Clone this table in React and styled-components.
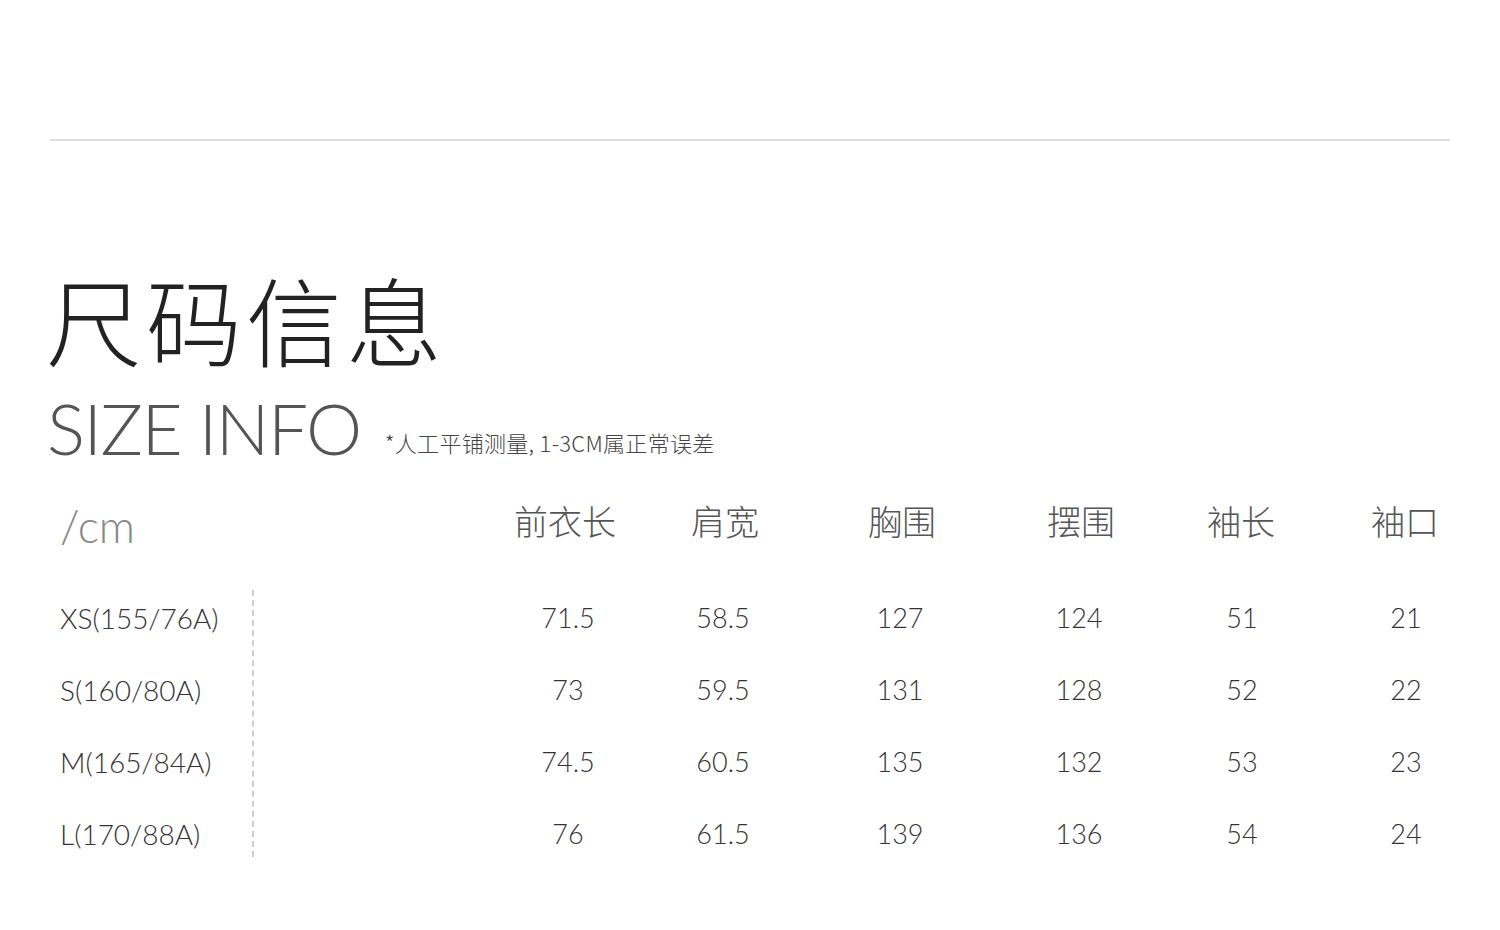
import React from 'react';
import styled, { createGlobalStyle } from 'styled-components';

const GlobalStyle = createGlobalStyle`
  html, body {
    margin: 0;
    padding: 0;
    background: #ffffff;
  }
  body {
    font-family: 'Lato', 'Noto Sans CJK SC', sans-serif;
  }
`;

const Page = styled.div`
  width: 1500px;
  height: 930px;
  padding: 139px 50px 0;
  box-sizing: border-box;
  background: #fff;
  overflow: hidden;
`;

const Rule = styled.div`
  height: 2px;
  background: #dedede;
`;

const Title = styled.h1`
  margin: 122px 0 0 -4px;
  font-family: 'Noto Sans CJK SC', sans-serif;
  font-weight: 300;
  font-size: 96px;
  line-height: 110px;
  letter-spacing: 4px;
  color: #222;
`;

const SubRow = styled.div`
  display: flex;
  align-items: flex-end;
  gap: 24px;
  margin-top: 15px;
  margin-left: -3px;
`;

const SubTitle = styled.span`
  font-family: 'Lato', sans-serif;
  font-weight: 300;
  font-size: 71px;
  line-height: 80px;
  color: #555;
  letter-spacing: -1.5px;
`;

const Note = styled.span`
  font-family: 'Noto Sans CJK SC', sans-serif;
  font-weight: 300;
  font-size: 22px;
  line-height: 30px;
  padding-bottom: 11px;
  letter-spacing: 0.3px;
  color: #444;
`;

const cols = '156px 154px 200px 158px 168px 160px';

const HeadRow = styled.div`
  display: flex;
  align-items: center;
  margin-top: 28px;
  height: 50px;
`;

const Unit = styled.div`
  flex: 0 0 440px;
  font-family: 'Lato', sans-serif;
  font-weight: 300;
  font-size: 45px;
  line-height: 50px;
  color: #888;
  padding: 10px 0 0 10px;
  box-sizing: border-box;
`;

const HeadGrid = styled.div`
  flex: 0 0 auto;
  display: grid;
  grid-template-columns: ${cols};
`;

const Head = styled.div`
  font-family: 'Noto Sans CJK SC', sans-serif;
  font-weight: 300;
  font-size: 34px;
  line-height: 50px;
  color: #555;
  text-align: center;
  transform: translateX(${p => p.$shift}px);
`;

const Body = styled.div`
  display: flex;
  align-items: flex-start;
  margin-top: 44px;
`;

const LabelCol = styled.div`
  flex: 0 0 204px;
  padding-left: 10px;
  box-sizing: border-box;
  border-right: 2px dashed #cdcdcd;
`;

const Label = styled.div`
  font-family: 'Lato', sans-serif;
  font-weight: 300;
  font-size: 28px;
  height: 72px;
  line-height: 72px;
  color: #333;
  &:first-child {
    margin-top: -8px;
  }
  &:last-child {
    margin-bottom: -13px;
  }
`;

const ValueGrid = styled.div`
  flex: 0 0 auto;
  display: grid;
  grid-template-columns: ${cols};
  grid-auto-rows: 72px;
  margin-left: 236px;
  margin-top: -8px;
`;

const Cell = styled.div`
  font-family: 'Lato', sans-serif;
  font-weight: 300;
  font-size: 27px;
  line-height: 72px;
  color: #333;
  text-align: center;
`;

const heads = ['前衣长', '肩宽', '胸围', '摆围', '袖长', '袖口'];
const headShift = [-3, 2, 2, 2, -1, -1];

const rows = [
  ['XS(155/76A)', '71.5', '58.5', '127', '124', '51', '21'],
  ['S(160/80A)', '73', '59.5', '131', '128', '52', '22'],
  ['M(165/84A)', '74.5', '60.5', '135', '132', '53', '23'],
  ['L(170/88A)', '76', '61.5', '139', '136', '54', '24'],
];

const App = () => (
  <>
    <GlobalStyle />
    <Page>
      <Rule />
      <Title>尺码信息</Title>
      <SubRow>
        <SubTitle>SIZE INFO</SubTitle>
        <Note>*人工平铺测量, 1-3CM属正常误差</Note>
      </SubRow>
      <HeadRow>
        <Unit>/cm</Unit>
        <HeadGrid>
          {heads.map((h, i) => (
            <Head key={h} $shift={headShift[i]}>{h}</Head>
          ))}
        </HeadGrid>
      </HeadRow>
      <Body>
        <LabelCol>
          {rows.map(r => (
            <Label key={r[0]}>{r[0]}</Label>
          ))}
        </LabelCol>
        <ValueGrid>
          {rows.map(r =>
            r.slice(1).map((v, i) => <Cell key={r[0] + i}>{v}</Cell>)
          )}
        </ValueGrid>
      </Body>
    </Page>
  </>
);

export default App;
